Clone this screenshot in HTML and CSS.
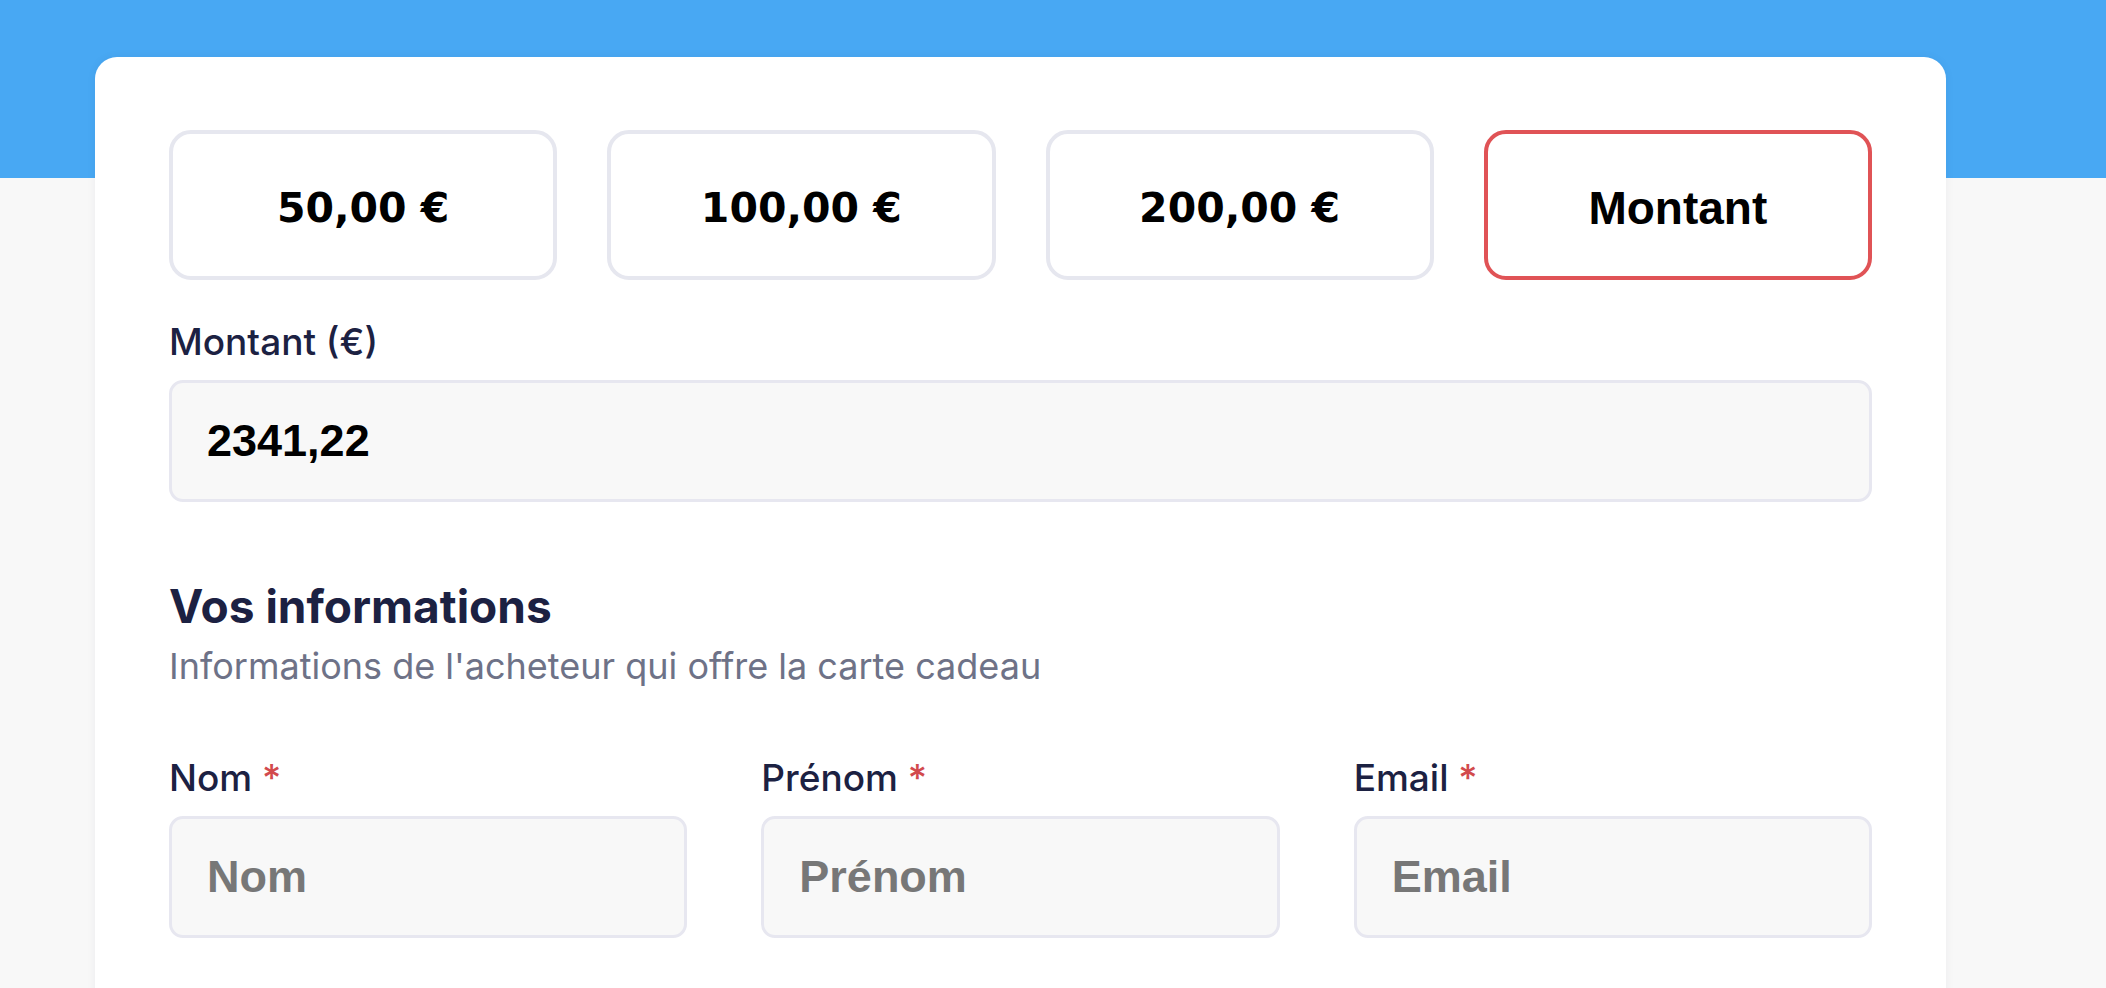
FILE: index.html
```html
<!DOCTYPE html>
<html lang="fr">
<head>
<meta charset="utf-8">
<title>Carte cadeau</title>
<link rel="stylesheet" href="styles.css">
</head>
<body>
<main class="page">
  <section class="card">
    <div class="presets">
      <button class="preset amount" type="button">50,00 €</button>
      <button class="preset amount" type="button">100,00 €</button>
      <button class="preset amount" type="button">200,00 €</button>
      <button class="preset custom selected" type="button">Montant</button>
    </div>

    <div class="field amount-field">
      <label class="label" for="montant">Montant (€)</label>
      <input class="input" id="montant" type="text" value="2341,22">
    </div>

    <div class="section-head">
      <h2 class="title">Vos informations</h2>
      <p class="subtitle">Informations de l'acheteur qui offre la carte cadeau</p>
    </div>

    <div class="fields">
      <div class="field">
        <label class="label" for="nom">Nom <span class="req">*</span></label>
        <input class="input" id="nom" type="text" placeholder="Nom">
      </div>
      <div class="field">
        <label class="label" for="prenom">Prénom <span class="req">*</span></label>
        <input class="input" id="prenom" type="text" placeholder="Prénom">
      </div>
      <div class="field">
        <label class="label" for="email">Email <span class="req">*</span></label>
        <input class="input" id="email" type="text" placeholder="Email">
      </div>
    </div>
  </section>
</main>
</body>
</html>
```

FILE: styles.css
```css
* { box-sizing: border-box; }

html, body {
  margin: 0;
  padding: 0;
}

body {
  background: linear-gradient(#48a8f3 0, #48a8f3 178px, #f8f8f8 178px, #f8f8f8 100%);
  min-height: 100vh;
  font-family: Inter, "Noto Sans", sans-serif;
  overflow: hidden;
}

.page {
  padding: 57px 0 0 95px;
}

.card {
  width: 1851px;
  min-height: 1100px;
  background: #ffffff;
  border-radius: 22px;
  box-shadow: 0 0 10px rgba(20, 30, 60, 0.06);
  padding: 73px 74px 80px 74px;
}

.presets {
  display: grid;
  grid-template-columns: repeat(4, 1fr);
  gap: 50px;
}

.preset {
  height: 150px;
  background: #ffffff;
  border: 4px solid #e6e7ef;
  border-radius: 22px;
  color: #000000;
  font-weight: 700;
  cursor: pointer;
  padding: 6px 0 0 0;
}

.preset.amount {
  font-family: "DejaVu Sans", sans-serif;
  font-size: 41px;
}

.preset.custom {
  font-family: "Liberation Sans", Arial, sans-serif;
  font-size: 46px;
}

.preset.selected {
  border-color: #e05356;
}

.field {
  display: flex;
  flex-direction: column;
  gap: 16px;
}

.amount-field {
  margin-top: 40px;
}

.label {
  font-family: Inter, "Noto Sans", sans-serif;
  font-size: 37px;
  font-weight: 500;
  line-height: 44px;
  color: #1c2142;
}

.req {
  color: #d24a4d;
}

.input {
  height: 122px;
  width: 100%;
  background: #f8f8f8;
  border: 3px solid #e7e7f0;
  border-radius: 14px;
  padding: 0 0 0 35px;
  font-family: "Liberation Sans", Arial, sans-serif;
  font-size: 45px;
  font-weight: 700;
  color: #000000;
  outline: none;
}

.input::placeholder {
  color: #777777;
  opacity: 1;
}

.section-head {
  margin-top: 77px;
}

.title {
  margin: 0;
  font-family: Inter, "Noto Sans", sans-serif;
  font-size: 46px;
  font-weight: 700;
  line-height: 54px;
  color: #1c2142;
}

.subtitle {
  margin: 11px 0 0 0;
  font-family: Inter, "Noto Sans", sans-serif;
  font-size: 36px;
  font-weight: 400;
  line-height: 44px;
  color: #6e7287;
}

.fields {
  margin-top: 68px;
  display: grid;
  grid-template-columns: repeat(3, 1fr);
  gap: 74px;
}
```
